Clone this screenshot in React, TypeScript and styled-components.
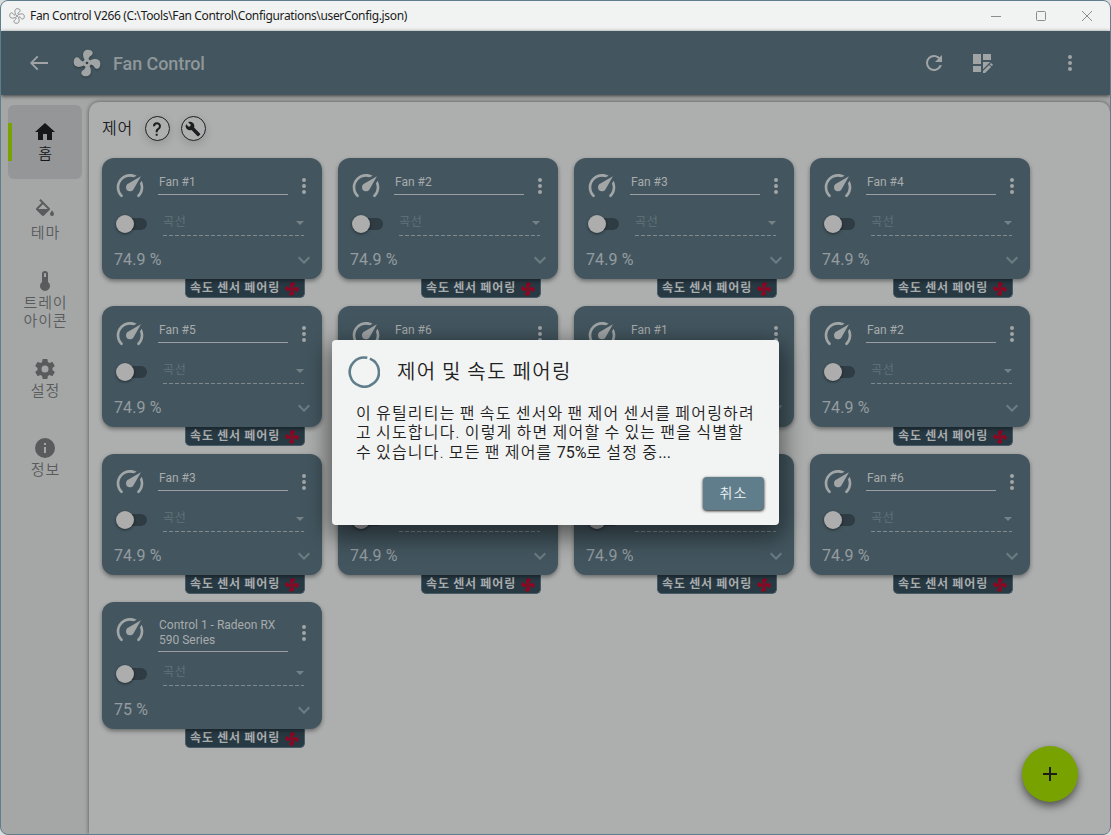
import React from "react";
import styled, { createGlobalStyle, css } from "styled-components";

const latin = `Roboto, "Noto Sans CJK KR", sans-serif`;

const Global = createGlobalStyle`
  * { box-sizing: border-box; }
  body { margin: 0; background: #d9dcdd; font-family: ${latin}; }
`;

const paths = {
  back: "M21,11H6.4L11.4,6.1L10,4.8L3,12L10,19.2L11.4,17.9L6.4,13H21Z",
  refresh:
    "M17.65,6.35C16.2,4.9 14.21,4 12,4A8,8 0 0,0 4,12A8,8 0 0,0 12,20C15.73,20 18.84,17.45 19.73,14H17.65C16.83,16.33 14.61,18 12,18A6,6 0 0,1 6,12A6,6 0 0,1 12,6C13.66,6 15.14,6.69 16.22,7.78L13,11H20V4L17.65,6.35Z",
  dashboard:
    "M3,3H11V13H3ZM13,3H21V9H13ZM3,15H11V21H3ZM13,11H20.2L13,18.2ZM21.04,12.13C20.9,12.13 20.76,12.19 20.65,12.3L19.65,13.3L21.7,15.35L22.7,14.35C22.92,14.14 22.92,13.79 22.7,13.58L21.42,12.3C21.31,12.19 21.18,12.13 21.04,12.13M19.07,13.88L13,19.94V22H15.06L21.12,15.93L19.07,13.88",
  dots: "M12,16A2,2 0 0,1 14,18A2,2 0 0,1 12,20A2,2 0 0,1 10,18A2,2 0 0,1 12,16M12,10A2,2 0 0,1 14,12A2,2 0 0,1 12,14A2,2 0 0,1 10,12A2,2 0 0,1 12,10M12,4A2,2 0 0,1 14,6A2,2 0 0,1 12,8A2,2 0 0,1 10,6A2,2 0 0,1 12,4Z",
  home: "M10,20V14H14V20H19V12H22L12,3L2,12H5V20H10Z",
  fill: "M19,11.5C19,11.5 17,13.67 17,15A2,2 0 0,0 19,17A2,2 0 0,0 21,15C21,13.67 19,11.5 19,11.5M5.21,10L10,5.21L14.79,10M16.56,8.94L7.62,0L6.21,1.41L8.59,3.79L3.44,8.94C2.85,9.5 2.85,10.47 3.44,11.06L8.94,16.56C9.23,16.85 9.62,17 10,17C10.38,17 10.77,16.85 11.06,16.56L16.56,11.06C17.15,10.47 17.15,9.5 16.56,8.94Z",
  thermometer:
    "M15,13V5A3,3 0 0,0 9,5V13A5,5 0 1,0 15,13M12,4A1,1 0 0,1 13,5V8H11V5A1,1 0 0,1 12,4Z",
  cog: "M12,15.5A3.5,3.5 0 0,1 8.5,12A3.5,3.5 0 0,1 12,8.5A3.5,3.5 0 0,1 15.5,12A3.5,3.5 0 0,1 12,15.5M19.43,12.97C19.47,12.65 19.5,12.33 19.5,12C19.5,11.67 19.47,11.34 19.43,11L21.54,9.37C21.73,9.22 21.78,8.95 21.66,8.73L19.66,5.27C19.54,5.05 19.27,4.96 19.05,5.05L16.56,6.05C16.04,5.66 15.5,5.32 14.87,5.07L14.5,2.42C14.46,2.18 14.25,2 14,2H10C9.75,2 9.54,2.18 9.5,2.42L9.13,5.07C8.5,5.32 7.96,5.66 7.44,6.05L4.95,5.05C4.73,4.96 4.46,5.05 4.34,5.27L2.34,8.73C2.21,8.95 2.27,9.22 2.46,9.37L4.57,11C4.53,11.34 4.5,11.67 4.5,12C4.5,12.33 4.53,12.65 4.57,12.97L2.46,14.63C2.27,14.78 2.21,15.05 2.34,15.27L4.34,18.73C4.46,18.95 4.73,19.03 4.95,18.95L7.44,17.94C7.96,18.34 8.5,18.68 9.13,18.93L9.5,21.58C9.54,21.82 9.75,22 10,22H14C14.25,22 14.46,21.82 14.5,21.58L14.87,18.93C15.5,18.67 16.04,18.34 16.56,17.94L19.05,18.95C19.27,19.03 19.54,18.95 19.66,18.73L21.66,15.27C21.78,15.05 21.73,14.78 21.54,14.63L19.43,12.97Z",
  info: "M13,9H11V7H13M13,17H11V11H13M12,2A10,10 0 0,0 2,12A10,10 0 0,0 12,22A10,10 0 0,0 22,12A10,10 0 0,0 12,2Z",
  gauge:
    "M12,16A3,3 0 0,1 9,13C9,11.88 9.61,10.9 10.5,10.39L20.21,4.77L14.68,14.35C14.18,15.33 13.17,16 12,16M12,3C13.81,3 15.5,3.5 16.97,4.32L14.87,5.53C14,5.19 13,5 12,5A8,8 0 0,0 4,13C4,15.21 4.89,17.21 6.34,18.65H6.35C6.74,19.04 6.74,19.67 6.35,20.06C5.96,20.45 5.32,20.45 4.93,20.07V20.07C3.12,18.26 2,15.76 2,13A10,10 0 0,1 12,3M22,13C22,15.76 20.88,18.26 19.07,20.07V20.07C18.68,20.45 18.05,20.45 17.66,20.06C17.27,19.67 17.27,19.04 17.66,18.65V18.65C19.11,17.2 20,15.21 20,13C20,12 19.81,11 19.46,10.1L20.67,8C21.5,9.5 22,11.18 22,13Z",
  fan: "M12,11A1,1 0 0,0 11,12A1,1 0 0,0 12,13A1,1 0 0,0 13,12A1,1 0 0,0 12,11M12.5,2C17,2 17.11,5.57 14.75,6.75C13.76,7.24 13.32,8.29 13.13,9.22C13.61,9.42 14.03,9.73 14.35,10.13C18.05,8.13 22.03,8.92 22.03,12.5C22.03,17 18.46,17.1 17.28,14.73C16.78,13.74 15.72,13.3 14.79,13.11C14.59,13.59 14.28,14 13.88,14.34C15.87,18.03 15.08,22 11.5,22C7,22 6.91,18.42 9.27,17.24C10.25,16.75 10.69,15.71 10.89,14.79C10.4,14.59 9.97,14.27 9.65,13.87C5.96,15.85 2,15.07 2,11.5C2,7 5.56,6.89 6.74,9.26C7.24,10.25 8.29,10.68 9.22,10.87C9.41,10.39 9.73,9.97 10.14,9.65C8.15,5.96 8.94,2 12.5,2Z",
  wrench:
    "M22.7,19L13.6,9.9C14.5,7.6 14,4.9 12.1,3C10.1,1 7.1,0.6 4.7,1.7L9,6L6,9L1.6,4.7C0.4,7.1 0.9,10.1 2.9,12.1C4.8,14 7.5,14.5 9.8,13.6L18.9,22.7C19.3,23.1 19.9,23.1 20.3,22.7L22.6,20.4C23.1,20 23.1,19.3 22.7,19Z",
  help: "M10,19H13V22H10V19M12,2C17.35,2.22 19.68,7.62 16.5,11.67C15.67,12.67 14.33,13.33 13.67,14.17C13,15 13,16 13,17H10C10,15.33 10,13.92 10.67,12.92C11.33,11.92 12.67,11.33 13.5,10.67C15.92,8.43 15.32,5.26 12,5A3,3 0 0,0 9,8H6A6,6 0 0,1 12,2Z",
  chevron: "M7.41,8.58L12,13.17L16.59,8.58L18,10L12,16L6,10L7.41,8.58Z",
  plus: "M19,13H13V19H11V13H5V11H11V5H13V11H19V13Z",
};

type IconName = keyof typeof paths;

const Svg = styled.svg`
  display: block;
  flex: none;
  fill: currentColor;
`;

const Icon = ({ name, size = 24 }: { name: IconName; size?: number }) => (
  <Svg width={size} height={size} viewBox="0 0 24 24">
    <path d={paths[name]} />
  </Svg>
);

const Window = styled.div`
  position: relative;
  display: flex;
  flex-direction: column;
  width: 1111px;
  height: 835px;
  border: 1px solid #5f7d8c;
  border-radius: 8px;
  background: #a5a7a7;
  overflow: hidden;
`;

const TitleBar = styled.div`
  display: flex;
  align-items: center;
  height: 30px;
  flex: none;
  padding-left: 8px;
  background: #f1f3f3;
  color: #1b1b1b;
  font: 12px/16px "Noto Sans", sans-serif;
`;

const AppGlyph = styled.span`
  display: flex;
  margin-right: 5px;
`;

const TitleText = styled.span`
  flex: 1;
  letter-spacing: -0.35px;
  white-space: nowrap;
`;

const Captions = styled.div`
  display: flex;
  color: #8b8d8d;
`;

const CaptionButton = styled.span`
  display: grid;
  place-items: center;
  width: 46px;
  height: 30px;

  &:first-child {
    padding-left: 2px;
  }
`;

const AppBar = styled.header`
  position: relative;
  display: flex;
  align-items: center;
  height: 64px;
  flex: none;
  padding: 0 28px 0 26px;
  background: #43565f;
  color: #a0a4a5;
  box-shadow: 0 1px 4px rgba(0, 0, 0, 0.65);
`;

const AppLogo = styled.span`
  margin: 0 10px 0 20px;
  filter: drop-shadow(0 1px 1px rgba(0, 0, 0, 0.35));
`;

const AppName = styled.h1`
  flex: 1;
  margin: 0;
  font-size: 18px;
  font-weight: 500;
  letter-spacing: -0.08px;
  color: #90979a;
`;

const AppActions = styled.div`
  display: flex;
  align-items: center;
  gap: 24px;
`;

const MoreAction = styled.span`
  margin-left: 40px;
`;

const Body = styled.div`
  display: flex;
  flex: 1;
  min-height: 0;
`;

const Sidebar = styled.nav`
  display: flex;
  flex-direction: column;
  gap: 5px;
  width: 88px;
  flex: none;
  padding: 10px 7px;
`;

const NavItem = styled.div<{ $active?: boolean }>`
  display: flex;
  flex-direction: column;
  align-items: center;
  justify-content: center;
  width: 74px;
  height: 74px;
  padding-bottom: 2px;
  border-radius: 6px;
  color: #595b5c;
  ${(p) =>
    p.$active &&
    css`
      background: linear-gradient(#78a200, #78a200) 0 18px / 4px 38px no-repeat #959697;
      color: #151718;
    `}
`;

const NavLabel = styled.span`
  margin-top: 1px;
  padding-left: 1px;
  font-size: 15px;
  line-height: 18px;
  font-weight: 350;
  letter-spacing: 0.9px;
  text-align: center;
  white-space: pre;
`;

const Panel = styled.main`
  flex: 1;
  margin-top: 7px;
  padding: 13px 12px 0 13px;
  border-radius: 10px 10px 0 0;
  background: #adafaf;
  box-shadow: 0 0 4px rgba(0, 0, 0, 0.5);
`;

const SectionHeader = styled.div`
  display: flex;
  align-items: center;
  height: 27px;
  margin-bottom: 16px;
  color: #1b1d1e;
`;

const SectionTitle = styled.h2`
  width: 42.5px;
  margin: 0;
  font-size: 16px;
  font-weight: 350;
  line-height: 25px;
  letter-spacing: 0.8px;
`;

const RoundButton = styled.span`
  display: grid;
  place-items: center;
  width: 25px;
  height: 25px;
  margin-right: 11px;
  border: 1.5px solid #1b1d1e;
  border-radius: 50%;
  box-shadow: 0 3px 8px rgba(0, 0, 0, 0.15);
`;

const CardGrid = styled.div`
  display: grid;
  grid-template-columns: repeat(4, 220px);
  gap: 8px 16px;
`;

const CardSlot = styled.div`
  display: flex;
  flex-direction: column;
`;

const Card = styled.section`
  position: relative;
  display: flex;
  flex-direction: column;
  padding: 12px 0 0 12px;
  border-radius: 12px;
  background: #43565f;
  color: #a2a6a7;
  box-shadow: 0 2px 4px rgba(0, 0, 0, 0.4);
`;

const CardTop = styled.div`
  display: flex;
  align-items: flex-start;
  margin-bottom: 8px;
`;

const CardName = styled.div`
  display: flex;
  align-items: center;
  width: 130px;
  min-height: 21px;
  margin: 4px 4px 0 12px;
  padding: 0 1px 3px;
  border-bottom: 1px solid #9b9fa1;
  font-size: 12px;
  line-height: 15px;
  color: #a8abac;
  white-space: pre;
`;

const CardMenu = styled.span`
  align-self: center;
`;

const CurveRow = styled.div`
  display: flex;
  align-items: flex-start;
  height: 26px;
`;

const Toggle = styled.span`
  display: flex;
  align-items: center;
  width: 30px;
  height: 12px;
  margin: 8px 16px 0 3px;
  border-radius: 6px;
  background: #2f3c43;
`;

const Knob = styled.span`
  width: 18px;
  height: 18px;
  margin-left: -1px;
  flex: none;
  border-radius: 50%;
  background: #adadad;
  box-shadow: 0 1px 3px rgba(0, 0, 0, 0.5);
`;

const CurveSelect = styled.div`
  display: flex;
  justify-content: space-between;
  width: 141px;
  height: 26px;
  padding-top: 4px;
  background: repeating-linear-gradient(90deg, #7e898e 0 4px, transparent 4px 6px) 0 100% / 100% 1px no-repeat;
  color: #62737b;
  font-size: 12px;
  line-height: 17px;
  letter-spacing: 0.6px;
  font-weight: 350;
`;

const Caret = styled.span`
  margin-top: 7px;
  width: 8px;
  height: 4px;
  background: #748288;
  clip-path: polygon(0 0, 100% 0, 50% 100%);
`;

const CardBottom = styled.div`
  display: flex;
  align-items: center;
  justify-content: space-between;
  height: 31px;
  margin: 8px 0 4px;
  padding: 0 6px 0 0;
  font-size: 16px;
  letter-spacing: 0.1px;
  color: #959c9f;
`;

const Expand = styled.span`
  color: #6d7d84;
`;

const SensorTag = styled.div`
  display: flex;
  align-items: center;
  gap: 3px;
  width: 120px;
  height: 19px;
  margin-left: 83px;
  padding: 0 4px;
  border: 1px solid #475a65;
  border-top: 0;
  border-radius: 0 0 5px 5px;
  background: #273943;
  color: #aaadae;
  font-size: 12px;
  font-weight: 700;
  letter-spacing: 0.9px;
  white-space: nowrap;
  word-spacing: -0.6px;
`;

const TagIcon = styled.span`
  margin-top: 1px;
  color: #900520;
`;

const TagText = styled.span`
  width: 92px;
  line-height: 17px;
`;

const AddButton = styled.button`
  position: absolute;
  left: 1021px;
  top: 745px;
  display: grid;
  place-items: center;
  width: 56px;
  height: 56px;
  padding: 0;
  border: 0;
  border-radius: 50%;
  background: #78a200;
  color: #1a1e14;
  box-shadow: 0 4px 8px rgba(0, 0, 0, 0.55);
`;

const Dialog = styled.div`
  position: absolute;
  left: 331px;
  top: 339px;
  display: flex;
  flex-direction: column;
  width: 447.4px;
  height: 185.4px;
  padding: 16px 15.4px 15.4px 16px;
  border-radius: 4px;
  background: #f1f4f3;
  color: #1f2122;
  box-shadow: 0 8px 24px 4px rgba(0, 0, 0, 0.5);
`;

const DialogHead = styled.div`
  display: flex;
  align-items: center;
  gap: 17px;
`;

const DialogTitle = styled.h3`
  margin: -1px 0 0;
  font-size: 20px;
  line-height: 28px;
  font-weight: 350;
  letter-spacing: 1.4px;
  word-spacing: -0.8px;
`;

const DialogText = styled.p`
  margin: 16px 0 0 8px;
  font-size: 16px;
  line-height: 19.4px;
  font-weight: 350;
  letter-spacing: 1.2px;
  word-spacing: -1px;
  white-space: pre;
`;

const Numeral = styled.span`
  font-weight: 400;
  letter-spacing: 0;
`;

const CancelButton = styled.button`
  align-self: flex-end;
  width: 61px;
  height: 33px;
  margin-top: auto;
  padding: 0 0 1px;
  border: 0;
  border-radius: 4px;
  background: #607d8b;
  color: #eef2f4;
  font: 350 14px/20px ${latin};
  letter-spacing: 1px;
  box-shadow: 0 1px 3px rgba(0, 0, 0, 0.9);
`;

const navItems: { icon: IconName; label: string }[] = [
  { icon: "home", label: "홈" },
  { icon: "fill", label: "테마" },
  { icon: "thermometer", label: "트레이\n아이콘" },
  { icon: "cog", label: "설정" },
  { icon: "info", label: "정보" },
];

const controls = [
  ...["Fan #1", "Fan #2", "Fan #3", "Fan #4", "Fan #5", "Fan #6", "Fan #1", "Fan #2", "Fan #3", "Fan #4", "Fan #5", "Fan #6"].map(
    (name) => ({ name, value: "74.9 %" })
  ),
  { name: "Control 1 - Radeon RX\n590 Series", value: "75 %" },
];

const ControlCard = ({ name, value }: { name: string; value: string }) => (
  <CardSlot>
    <Card>
      <CardTop>
        <Icon name="gauge" size={32} />
        <CardName>{name}</CardName>
        <CardMenu>
          <Icon name="dots" />
        </CardMenu>
      </CardTop>
      <CurveRow>
        <Toggle>
          <Knob />
        </Toggle>
        <CurveSelect>
          곡선
          <Caret />
        </CurveSelect>
      </CurveRow>
      <CardBottom>
        {value}
        <Expand>
          <Icon name="chevron" />
        </Expand>
      </CardBottom>
    </Card>
    <SensorTag>
      <TagText>속도 센서 페어링</TagText>
      <TagIcon>
        <Icon name="fan" size={16} />
      </TagIcon>
    </SensorTag>
  </CardSlot>
);

export default function App() {
  return (
    <>
      <Global />
      <Window>
        <TitleBar>
          <AppGlyph>
            <svg width="16" height="16" viewBox="1 1 22 22" fill="none" stroke="#858787" strokeWidth="1.3">
              <path d={paths.fan} />
            </svg>
          </AppGlyph>
          <TitleText>Fan Control V266 (C:\Tools\Fan Control\Configurations\userConfig.json)</TitleText>
          <Captions>
            <CaptionButton>
              <svg width="10" height="10" stroke="currentColor">
                <path d="M0 5.5H10" />
              </svg>
            </CaptionButton>
            <CaptionButton>
              <svg width="10" height="10" stroke="currentColor" fill="none">
                <rect x=".5" y=".5" width="9" height="9" rx="1" />
              </svg>
            </CaptionButton>
            <CaptionButton>
              <svg width="10" height="10" stroke="currentColor">
                <path d="M0 0L10 10M10 0L0 10" />
              </svg>
            </CaptionButton>
          </Captions>
        </TitleBar>
        <AppBar>
          <Icon name="back" />
          <AppLogo>
            <Icon name="fan" size={32} />
          </AppLogo>
          <AppName>Fan Control</AppName>
          <AppActions>
            <Icon name="refresh" />
            <Icon name="dashboard" />
            <MoreAction>
              <Icon name="dots" />
            </MoreAction>
          </AppActions>
        </AppBar>
        <Body>
          <Sidebar>
            {navItems.map((item, i) => (
              <NavItem key={item.icon} $active={i === 0}>
                <Icon name={item.icon} />
                <NavLabel>{item.label}</NavLabel>
              </NavItem>
            ))}
          </Sidebar>
          <Panel>
            <SectionHeader>
              <SectionTitle>제어</SectionTitle>
              <RoundButton>
                <Icon name="help" size={16} />
              </RoundButton>
              <RoundButton>
                <Icon name="wrench" size={16} />
              </RoundButton>
            </SectionHeader>
            <CardGrid>
              {controls.map((c, i) => (
                <ControlCard key={i} name={c.name} value={c.value} />
              ))}
            </CardGrid>
          </Panel>
        </Body>
        <AddButton>
          <Icon name="plus" />
        </AddButton>
        <Dialog>
          <DialogHead>
            <svg width="32" height="32" viewBox="0 0 32 32" fill="none" stroke="#607d8b" strokeWidth="2.6">
              <path d="M21.9 2.6A14.6 14.6 0 1 1 19.3 1.8" />
            </svg>
            <DialogTitle>제어 및 속도 페어링</DialogTitle>
          </DialogHead>
          <DialogText>
            {"이 유틸리티는 팬 속도 센서와 팬 제어 센서를 페어링하려\n고 시도합니다. 이렇게 하면 제어할 수 있는 팬을 식별할\n수 있습니다. 모든 팬 제어를 "}
            <Numeral>75%</Numeral>
            로 설정 중<Numeral>...</Numeral>
          </DialogText>
          <CancelButton>취소</CancelButton>
        </Dialog>
      </Window>
    </>
  );
}
